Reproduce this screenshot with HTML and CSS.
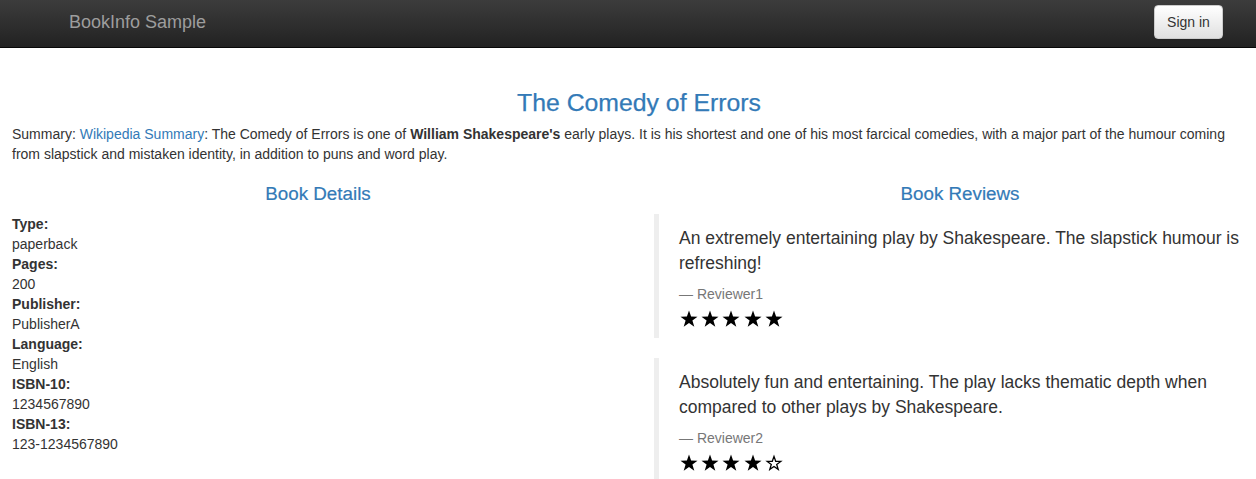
FILE: index.html
```html
<!DOCTYPE html>
<html lang="en">
<head>
<meta charset="utf-8">
<title>Simple Bookstore App</title>
<link rel="stylesheet" href="styles.css">
</head>
<body>
<nav class="navbar">
  <a class="brand" href="#">BookInfo Sample</a>
  <button class="btn-signin" type="button">Sign in</button>
</nav>

<main class="page">
  <h3 class="title">The Comedy of Errors</h3>
  <p class="summary">Summary: <a href="#">Wikipedia Summary</a>: The Comedy of Errors is one of <b>William Shakespeare's</b> early plays. It is his shortest and one of his most farcical comedies, with a major part of the humour coming from slapstick and mistaken identity, in addition to puns and word play.</p>

  <div class="columns">
    <section class="col">
      <h4 class="col-title">Book Details</h4>
      <dl class="details">
        <dt>Type:</dt><dd>paperback</dd>
        <dt>Pages:</dt><dd>200</dd>
        <dt>Publisher:</dt><dd>PublisherA</dd>
        <dt>Language:</dt><dd>English</dd>
        <dt>ISBN-10:</dt><dd>1234567890</dd>
        <dt>ISBN-13:</dt><dd>123-1234567890</dd>
      </dl>
    </section>

    <section class="col">
      <h4 class="col-title">Book Reviews</h4>
      <blockquote class="review">
        <p>An extremely entertaining play by Shakespeare. The slapstick humour is refreshing!</p>
        <small class="reviewer">— Reviewer1</small>
        <div class="stars">
          <svg class="star" viewBox="0 0 18 18"><path d="M9 0.5 L11.1 6.6 L17.5 6.7 L12.4 10.6 L14.3 16.8 L9 13.1 L3.7 16.8 L5.6 10.6 L0.5 6.7 L6.9 6.6 Z"/></svg>
          <svg class="star" viewBox="0 0 18 18"><path d="M9 0.5 L11.1 6.6 L17.5 6.7 L12.4 10.6 L14.3 16.8 L9 13.1 L3.7 16.8 L5.6 10.6 L0.5 6.7 L6.9 6.6 Z"/></svg>
          <svg class="star" viewBox="0 0 18 18"><path d="M9 0.5 L11.1 6.6 L17.5 6.7 L12.4 10.6 L14.3 16.8 L9 13.1 L3.7 16.8 L5.6 10.6 L0.5 6.7 L6.9 6.6 Z"/></svg>
          <svg class="star" viewBox="0 0 18 18"><path d="M9 0.5 L11.1 6.6 L17.5 6.7 L12.4 10.6 L14.3 16.8 L9 13.1 L3.7 16.8 L5.6 10.6 L0.5 6.7 L6.9 6.6 Z"/></svg>
          <svg class="star" viewBox="0 0 18 18"><path d="M9 0.5 L11.1 6.6 L17.5 6.7 L12.4 10.6 L14.3 16.8 L9 13.1 L3.7 16.8 L5.6 10.6 L0.5 6.7 L6.9 6.6 Z"/></svg>
        </div>
      </blockquote>
      <blockquote class="review">
        <p>Absolutely fun and entertaining. The play lacks thematic depth when compared to other plays by Shakespeare.</p>
        <small class="reviewer">— Reviewer2</small>
        <div class="stars">
          <svg class="star" viewBox="0 0 18 18"><path d="M9 0.5 L11.1 6.6 L17.5 6.7 L12.4 10.6 L14.3 16.8 L9 13.1 L3.7 16.8 L5.6 10.6 L0.5 6.7 L6.9 6.6 Z"/></svg>
          <svg class="star" viewBox="0 0 18 18"><path d="M9 0.5 L11.1 6.6 L17.5 6.7 L12.4 10.6 L14.3 16.8 L9 13.1 L3.7 16.8 L5.6 10.6 L0.5 6.7 L6.9 6.6 Z"/></svg>
          <svg class="star" viewBox="0 0 18 18"><path d="M9 0.5 L11.1 6.6 L17.5 6.7 L12.4 10.6 L14.3 16.8 L9 13.1 L3.7 16.8 L5.6 10.6 L0.5 6.7 L6.9 6.6 Z"/></svg>
          <svg class="star" viewBox="0 0 18 18"><path d="M9 0.5 L11.1 6.6 L17.5 6.7 L12.4 10.6 L14.3 16.8 L9 13.1 L3.7 16.8 L5.6 10.6 L0.5 6.7 L6.9 6.6 Z"/></svg>
          <svg class="star star-empty" viewBox="0 0 18 18"><path d="M9 2.4 L10.7 7.3 L15.8 7.4 L11.7 10.5 L13.2 15.4 L9 12.5 L4.8 15.4 L6.3 10.5 L2.2 7.4 L7.3 7.3 Z"/></svg>
        </div>
      </blockquote>
    </section>
  </div>
</main>
</body>
</html>
```

FILE: styles.css
```css
html {
  overflow-x: hidden;
}

body {
  margin: 0;
  font-family: "Liberation Sans", Arial, Helvetica, sans-serif;
  font-size: 14px;
  line-height: 20px;
  color: #333;
  background: #fff;
}

a {
  color: #337ab7;
  text-decoration: none;
}

.navbar {
  display: flex;
  align-items: center;
  justify-content: space-between;
  height: 47px;
  padding: 0 33px 0 69px;
  background: linear-gradient(to bottom, #3c3c3c 0%, #222 100%);
  border-bottom: 1px solid #080808;
}

.brand {
  color: #9d9d9d;
  font-size: 18px;
  line-height: 20px;
  margin-top: -3px;
}

.btn-signin {
  height: 34px;
  width: 69px;
  padding: 6px 12px;
  margin-top: -4px;
  font-family: inherit;
  font-size: 14px;
  line-height: 20px;
  color: #333;
  background: linear-gradient(to bottom, #fff 0%, #e0e0e0 100%);
  border: 1px solid #ccc;
  border-radius: 4px;
  box-shadow: inset 0 1px 0 rgba(255,255,255,.15), 0 1px 1px rgba(0,0,0,.075);
}

.page {
  width: 1254px;
  padding: 20px 12px 0 12px;
}

.title {
  margin: 22px 0 8px;
  text-align: center;
  font-size: 24.8px;
  line-height: 26px;
  font-weight: normal;
  color: #337ab7;
  -webkit-text-stroke: 0.25px #337ab7;
}

.summary {
  margin: 0 0 10px;
  max-width: 1232px;
}

.columns {
  display: grid;
  grid-template-columns: 612px 612px;
  column-gap: 30px;
}

.col-title {
  margin: 10px 0 10px;
  text-align: center;
  font-size: 18.8px;
  line-height: 20px;
  font-weight: normal;
  color: #337ab7;
  -webkit-text-stroke: 0.2px #337ab7;
}

.details {
  margin: 0;
}

.details dt {
  font-weight: bold;
}

.details dd {
  margin: 0;
}

.review {
  margin: 0 0 20px;
  padding: 10px 20px;
  border-left: 5px solid #eee;
  font-size: 17.5px;
  line-height: 25px;
}

.review p {
  margin: 0 0 10px;
  padding-top: 2px;
  margin-bottom: 8px;
}

.reviewer {
  display: block;
  font-size: 14px;
  line-height: 20px;
  color: #777;
}

.stars {
  display: flex;
  align-items: center;
  gap: 3.2px;
  height: 24px;
  padding-left: 1px;
  padding-top: 6px;
  box-sizing: border-box;
}

.star {
  width: 18px;
  height: 18px;
  fill: #000;
}

.star-empty {
  fill: none;
  stroke: #000;
  stroke-width: 1.3;
}
```
